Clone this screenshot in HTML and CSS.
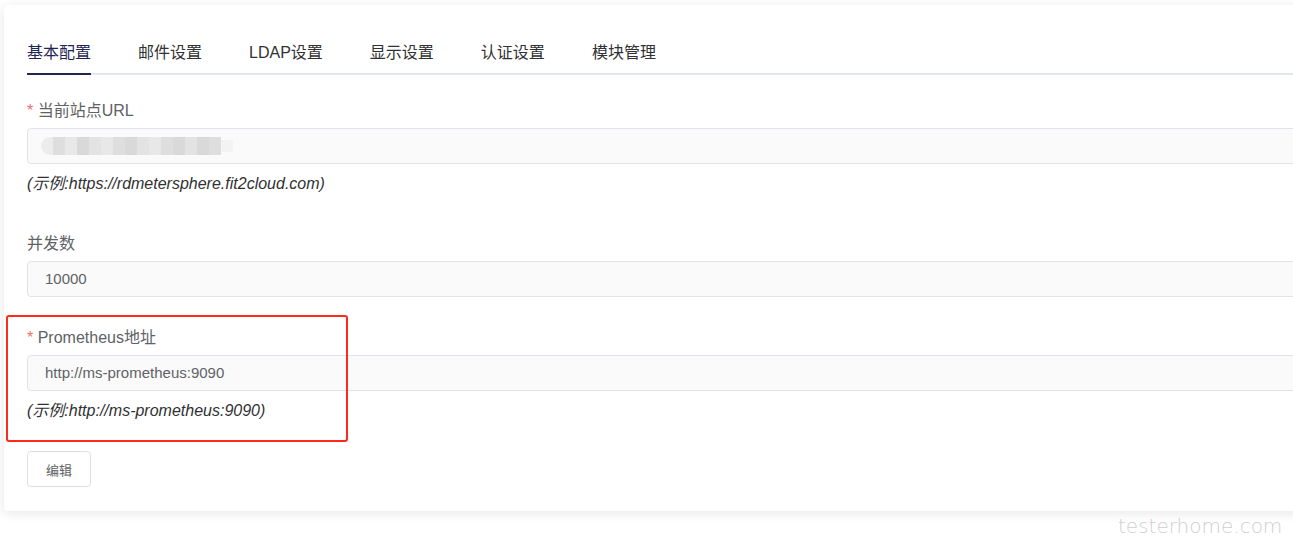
FILE: index.html
```html
<!DOCTYPE html>
<html lang="zh-CN">
<head>
  <meta charset="UTF-8">
  <title>系统参数设置</title>
  <link rel="stylesheet" href="styles.css">
</head>
<body>

<div class="card">
  <div class="tabs">
    <div class="tab active">基本配置</div>
    <div class="tab">邮件设置</div>
    <div class="tab">LDAP设置</div>
    <div class="tab">显示设置</div>
    <div class="tab">认证设置</div>
    <div class="tab">模块管理</div>
  </div>

  <div class="form">
    <div class="form-item first">
      <label class="label"><span class="star">*</span> 当前站点URL</label>
      <div class="input">
        <div class="blur">
          <i class="b1"></i><i class="b2"></i><i class="b3"></i><i class="b4"></i><i class="b5"></i><i class="b3"></i><i class="b2"></i><i class="b4"></i><i class="b5"></i><i class="b3"></i><i class="b2"></i><i class="b4"></i><i class="b5"></i><i class="b4"></i><i class="b2"></i><i class="b6"></i>
        </div>
      </div>
      <div class="hint">(示例:https://rdmetersphere.fit2cloud.com)</div>
    </div>

    <div class="form-item">
      <label class="label">并发数</label>
      <div class="input">10000</div>
    </div>

    <div class="form-item marked">
      <label class="label"><span class="star">*</span> Prometheus地址</label>
      <div class="input">http://ms-prometheus:9090</div>
      <div class="hint">(示例:http://ms-prometheus:9090)</div>
      <div class="mark"></div>
    </div>

    <button class="btn">编辑</button>
  </div>
</div>

<div class="watermark">testerhome.com</div>

</body>
</html>
```

FILE: styles.css
```css
body {
  margin: 0;
  background: #fff;
  font-family: "Liberation Sans", "Noto Sans CJK SC", sans-serif;
  color: #303133;
  overflow: hidden;
  height: 556px;
  position: relative;
}
.card {
  margin: 5px -40px 0 4px;
  background: #fff;
  border-radius: 4px;
  box-shadow: 0 2px 12px 0 rgba(0, 0, 0, 0.1);
  padding: 28px 0 24px 23px;
}
.tabs {
  display: flex;
  gap: 47px;
  height: 40px;
  border-bottom: 2px solid #e4e7ed;
}
.tab {
  font-size: 16px;
  line-height: 40px;
  color: #303133;
  height: 40px;
}
.tab.active {
  color: #1f2656;
  border-bottom: 2px solid #1f2656;
}
.form {
  padding-top: 25px;
}
.form-item {
  position: relative;
  margin-bottom: 30px;
}
.form-item.first {
  margin-bottom: 39px;
}
.form-item.marked {
  margin-bottom: 30px;
}
.label {
  display: block;
  font-size: 16px;
  line-height: 22px;
  color: #606266;
  margin-bottom: 6px;
}
.star {
  color: #f56c6c;
}
.input {
  box-sizing: border-box;
  height: 36px;
  background: #fafafa;
  border: 1px solid #e2e2ea;
  border-radius: 4px;
  padding: 0 17px;
  font-size: 15px;
  line-height: 34px;
  color: #606266;
}
.blur {
  display: flex;
  height: 34px;
  align-items: center;
  margin-left: -4px;
}
.blur i {
  display: block;
  width: 12px;
  height: 18px;
}
.blur .b1 { background: #ececec; border-radius: 9px 0 0 9px; }
.blur .b2 { background: #dedede; }
.blur .b3 { background: #e8e8e8; }
.blur .b4 { background: #d9d9d9; }
.blur .b5 { background: #e3e3e3; }
.blur .b6 { background: #f3f3f3; height: 12px; }
.hint {
  margin-top: 10px;
  font-size: 16px;
  line-height: 20px;
  font-style: italic;
  color: #303133;
}
.mark {
  position: absolute;
  left: -21px;
  top: -12px;
  width: 338px;
  height: 123px;
  border: 2px solid #ff2a1a;
  border-radius: 3px;
}
.btn {
  display: block;
  width: 64px;
  height: 36px;
  background: #fff;
  border: 1px solid #dcdfe6;
  border-radius: 4px;
  font-family: inherit;
  font-size: 13px;
  color: #606266;
}
.watermark {
  position: absolute;
  left: 1118px;
  top: 514px;
  font-family: "DejaVu Sans", sans-serif;
  font-weight: 200;
  font-size: 20px;
  color: #cfcfcf;
}
```
